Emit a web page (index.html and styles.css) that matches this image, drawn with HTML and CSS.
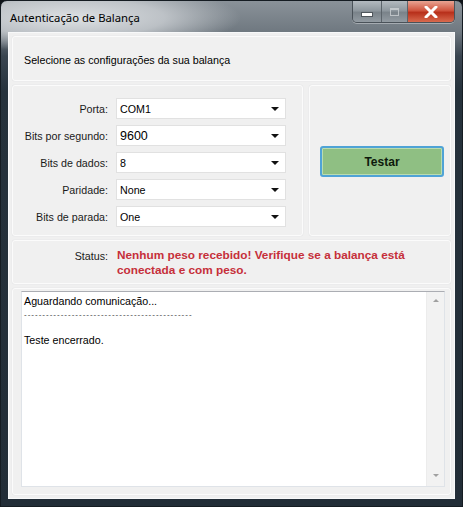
FILE: index.html
```html
<!doctype html>
<html>
    <head>
        <meta charset="utf-8" />
        <title>Autenticação de Balança</title>
        <link rel="stylesheet" href="styles.css">
    </head>
    <body>
        <div class="window">
            <div class="titlebar">
                <span class="title">Autenticação de Balança</span>
                <div class="caption">
                    <span class="cap cap-min"><i></i></span>
                    <span class="cap cap-max"><i></i></span>
                    <span class="cap cap-close">
                        <svg width="14" height="12" viewBox="0 0 14 12">
                            <path d="M2 1 L12 11 M12 1 L2 11" stroke="#fff" stroke-width="3" stroke-linecap="round" />
                        </svg>
                    </span>
                </div>
            </div>

            <div class="client">
                <div class="panel intro">
                    Selecione as configurações da sua balança
                </div>

                <div class="settings-row">
                    <div class="panel settings">
                        <label>Porta:</label>
                        <div class="combo"><span>COM1</span><i class="arrow"></i></div>

                        <label>Bits por segundo:</label>
                        <div class="combo combo-big"><span>9600</span><i class="arrow"></i></div>

                        <label>Bits de dados:</label>
                        <div class="combo"><span>8</span><i class="arrow"></i></div>

                        <label>Paridade:</label>
                        <div class="combo"><span>None</span><i class="arrow"></i></div>

                        <label>Bits de parada:</label>
                        <div class="combo"><span>One</span><i class="arrow"></i></div>
                    </div>

                    <div class="panel action">
                        <button class="test-btn">Testar</button>
                    </div>
                </div>

                <div class="panel status">
                    <label>Status:</label>
                    <span class="status-msg">Nenhum peso recebido! Verifique se a balança está conectada e com peso.</span>
                </div>

                <div class="panel log">
                    <div class="textbox">
                        <div class="log-text">
                            <div>Aguardando comunicação...</div>
                            <div class="dashes">----------------------------------------------</div>
                            <div>&nbsp;</div>
                            <div>Teste encerrado.</div>
                        </div>
                        <div class="scrollbar">
                            <i class="sb-up"></i>
                            <i class="sb-down"></i>
                        </div>
                    </div>
                </div>
            </div>
        </div>
    </body>
</html>
```

FILE: styles.css
```css
body {
    margin: 0;
    background-color: #0e1318;
    font-family: "Liberation Sans", Arial, sans-serif;
    font-size: 10.7px;
    color: #000;
}

.window {
    width: 463px;
    height: 507px;
    box-sizing: border-box;
    display: flex;
    flex-direction: column;
    border-radius: 7px 7px 0 0;
    border: 1px solid #151c22;
    background:
        radial-gradient(ellipse 170px 34px at 70px 17px, rgba(222, 225, 228, 1) 0%, rgba(205, 209, 213, 0.8) 55%, rgba(205, 209, 213, 0) 100%),
        linear-gradient(180deg, #8a9299 0px, #6f7880 31px, #3a4550 55px, #26323c 90px, #222d37 100%);
}

/* title bar */
.titlebar {
    height: 31px;
    display: flex;
    align-items: flex-start;
    padding: 0 7px 0 9px;
}

.title {
    font-family: "Noto Sans", "Open Sans", sans-serif;
    font-size: 11.3px;
    line-height: 34px;
    color: #000;
}

.caption {
    margin-left: auto;
    display: flex;
    height: 21px;
    border: 1px solid #4a5259;
    border-top: none;
    border-radius: 0 0 5px 5px;
    overflow: hidden;
    box-shadow: 0 1px 0 rgba(255, 255, 255, 0.35);
}

.cap {
    display: flex;
    align-items: center;
    justify-content: center;
    background: linear-gradient(180deg, #b3bac0 0%, #8f989f 45%, #7a838a 55%, #939ba2 100%);
    border-right: 1px solid #5c646b;
}

.cap-min {
    width: 28px;
}

.cap-min i {
    width: 10px;
    height: 3px;
    margin-top: 5px;
    background: #fff;
    border: 1px solid #4f565c;
}

.cap-max {
    width: 25px;
}

.cap-max i {
    width: 7px;
    height: 5px;
    border: 1px solid #d6dadd;
    border-top-width: 2px;
    opacity: 0.7;
}

.cap-close {
    width: 46px;
    border-right: none;
    background: linear-gradient(180deg, #e8a493 0%, #d0553f 45%, #b8301b 55%, #d86a4e 100%);
}

/* client area */
.client {
    flex: 1;
    margin: 0 7px 7px 7px;
    padding: 3px;
    background-color: #f0f0f0;
    border: 1px solid #f8f9fa;
    display: flex;
    flex-direction: column;
    gap: 4px;
}

.panel {
    box-sizing: border-box;
    border: 1px solid #fbfbfb;
    border-radius: 3px;
    box-shadow: 0 0 1px #c9cdd1;
}

.intro {
    height: 45px;
    padding: 17px 0 0 11px;
}

.settings-row {
    height: 151px;
    display: flex;
    gap: 6px;
}

.settings {
    width: 291px;
    padding: 12px 0 0 0;
    display: grid;
    grid-template-columns: 95px 170px;
    grid-auto-rows: 21px;
    column-gap: 8px;
    row-gap: 6px;
    align-content: start;
}

label {
    text-align: right;
    align-self: center;
    color: #1a1a1a;
}

.combo {
    box-sizing: border-box;
    display: flex;
    align-items: center;
    padding: 0 0 0 3px;
    background: white;
    border: 1px solid #e1e1e1;
}

.combo-big span {
    font-size: 12.5px;
}

.arrow {
    margin-left: auto;
    margin-right: 6px;
    width: 0;
    height: 0;
    border-left: 4px solid transparent;
    border-right: 4px solid transparent;
    border-top: 4px solid #111;
}

.action {
    flex: 1;
    display: flex;
    align-items: center;
    padding: 2px 0 0 10px;
}

.test-btn {
    width: 124px;
    height: 31px;
    background-color: #8fbf83;
    border: 2px solid #4fa3d6;
    border-radius: 3px;
    box-shadow: inset 0 0 0 1px #b9dcb0;
    font-family: "Liberation Sans", Arial, sans-serif;
    font-weight: bold;
    font-size: 12px;
    color: #0d1a0c;
    padding: 0;
}

.status {
    height: 44px;
    padding: 7px 0 0 0;
    display: grid;
    grid-template-columns: 95px 310px;
    column-gap: 9px;
    align-content: start;
}

.status label {
    align-self: start;
    line-height: 16px;
}

.status-msg {
    color: #c62f3a;
    font-weight: bold;
    font-size: 11.8px;
    line-height: 15px;
}

.log {
    flex: 1;
    padding: 2px 5px 7px 8px;
    display: flex;
}

.textbox {
    flex: 1;
    display: flex;
    background: white;
    border: 1px solid #dfe3e8;
    border-top-color: #abadb3;
}

.log-text {
    flex: 1;
    padding: 3px 0 0 2px;
    line-height: 13px;
}

.dashes {
    font-size: 8px;
    letter-spacing: 1px;
    color: #333;
}

.scrollbar {
    width: 17px;
    background-color: #f2f2f2;
    border-left: 1px solid #ececec;
    display: flex;
    flex-direction: column;
    justify-content: space-between;
    align-items: center;
    padding: 7px 0 9px 0;
}

.sb-up,
.sb-down {
    width: 0;
    height: 0;
    border-left: 3px solid transparent;
    border-right: 3px solid transparent;
}

.sb-up {
    border-bottom: 3px solid #a0a0a0;
}

.sb-down {
    border-top: 3px solid #a0a0a0;
}
```
